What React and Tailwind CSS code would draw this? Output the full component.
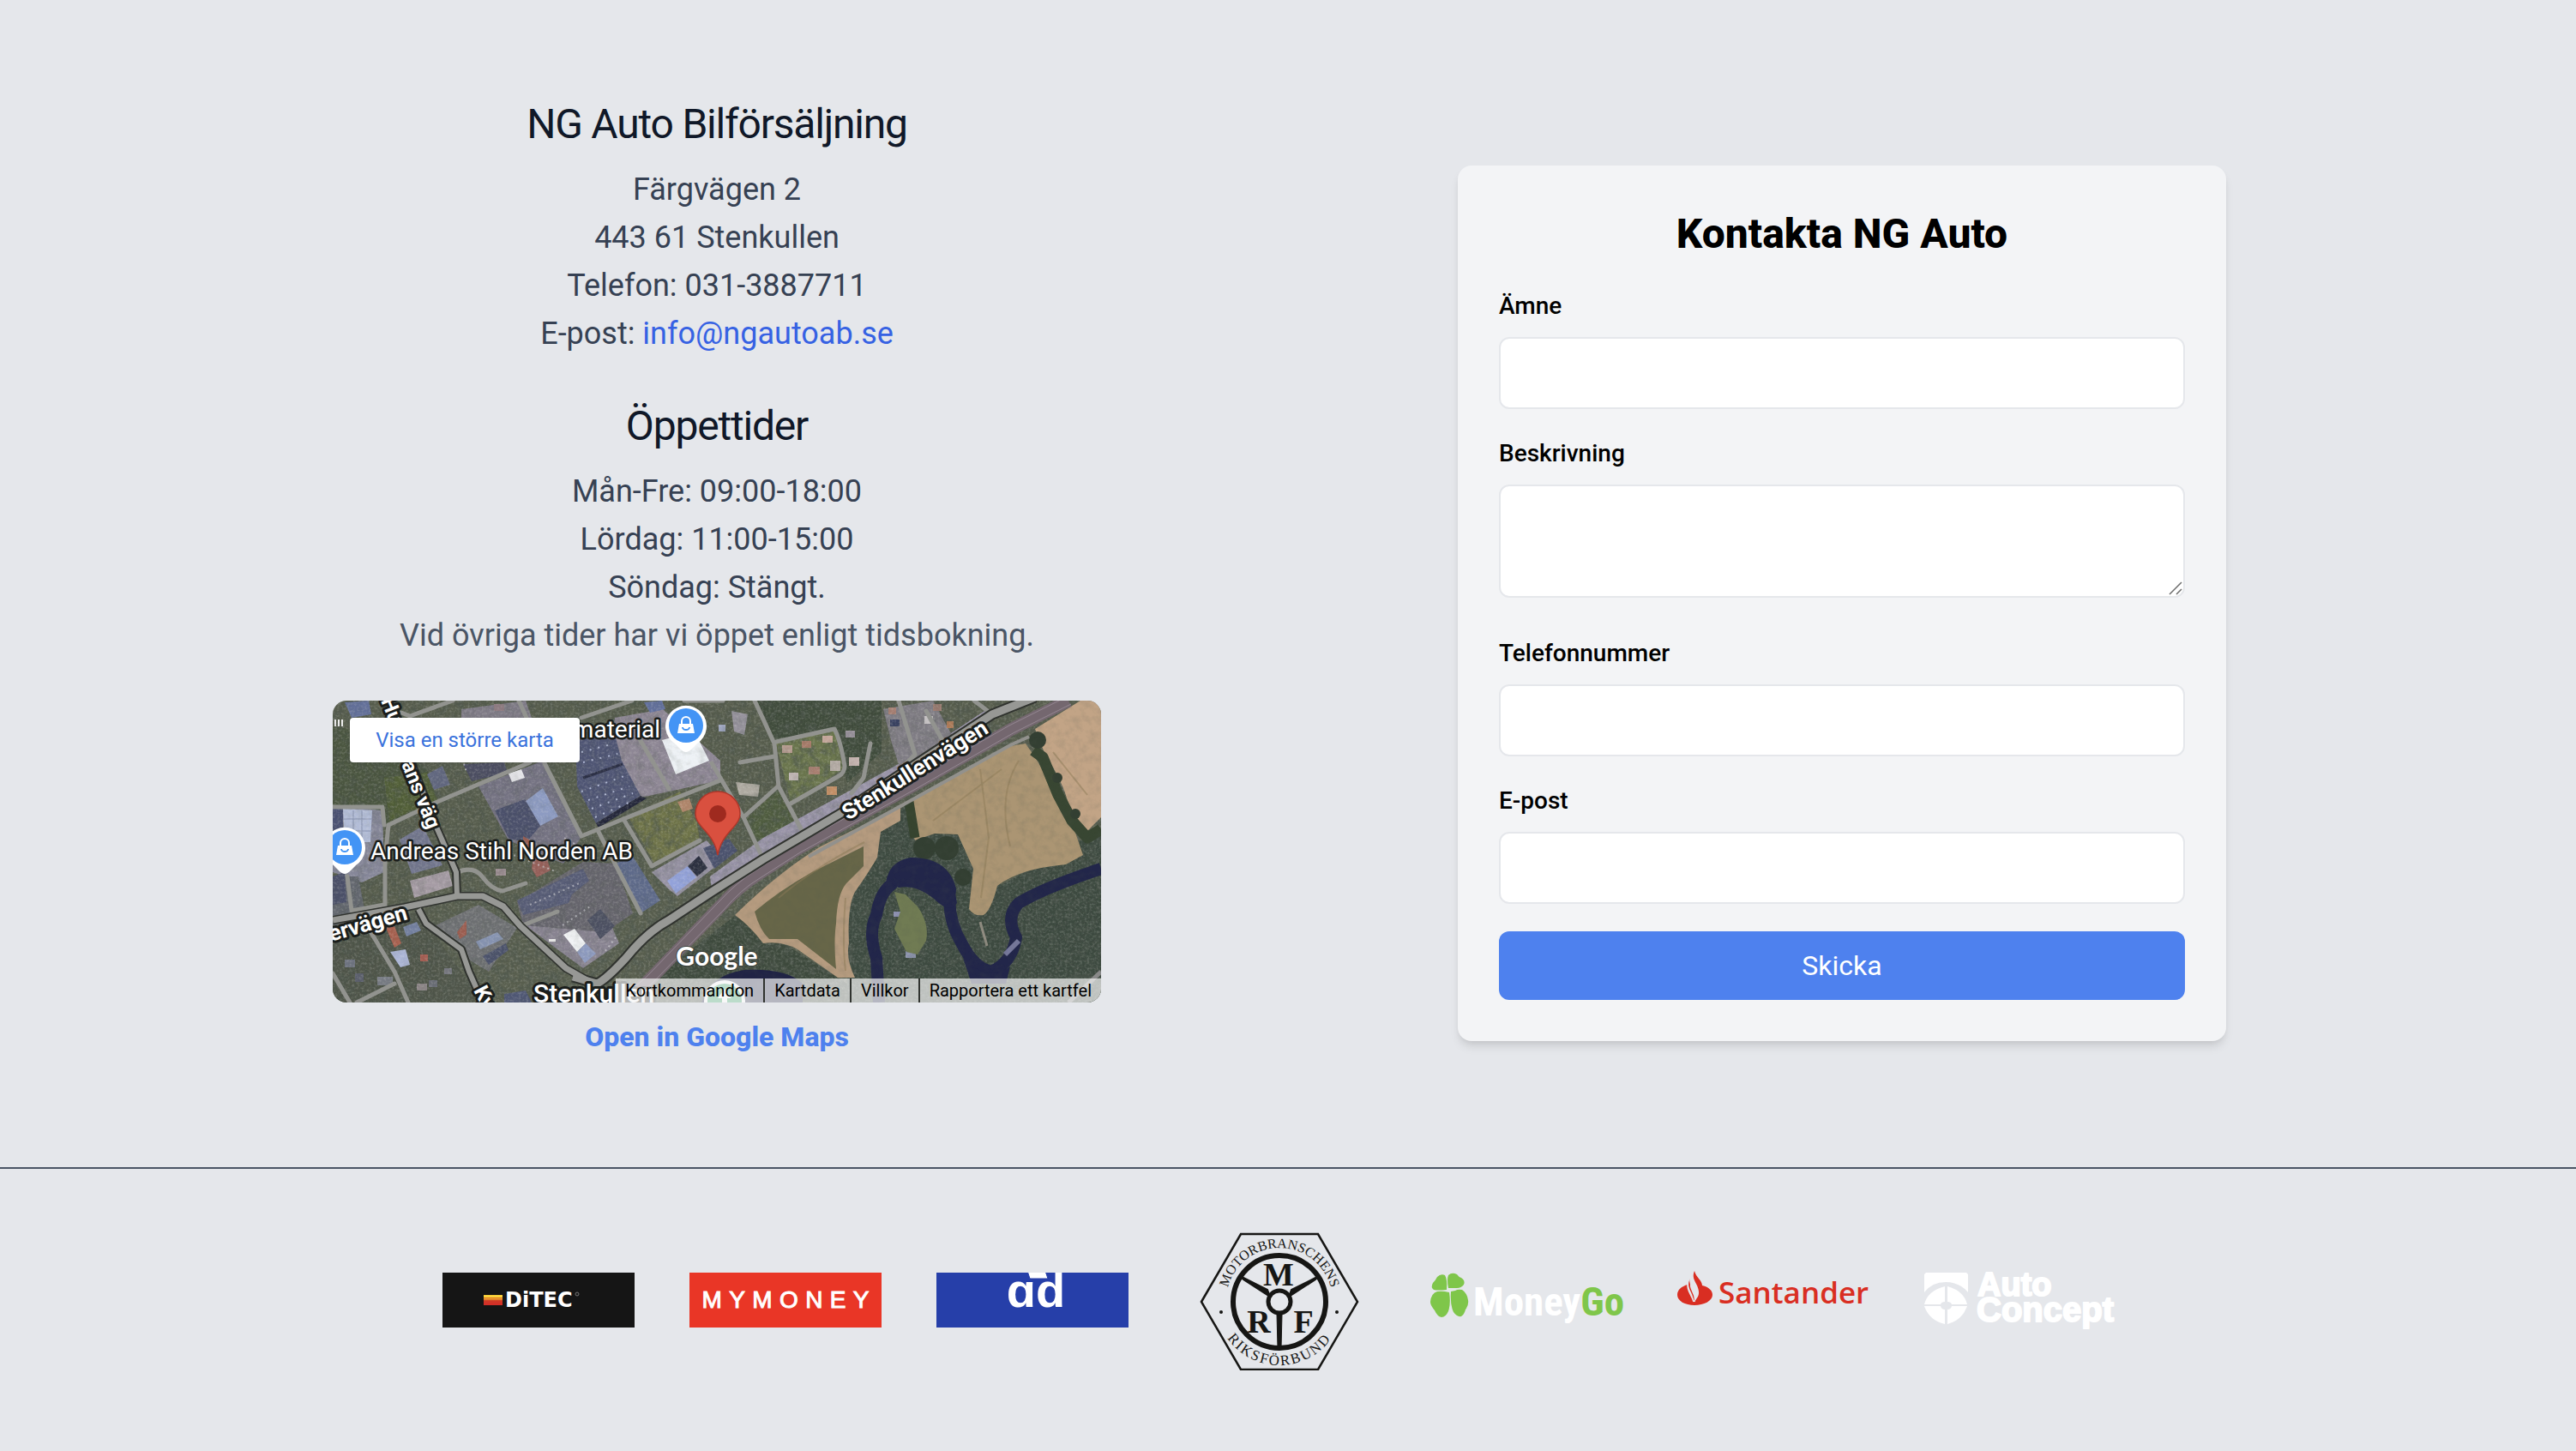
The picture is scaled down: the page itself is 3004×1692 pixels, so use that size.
import React from "react";

const halo = {
  fill: "#ffffff",
  stroke: "#1b1e1c",
  strokeLinejoin: "round",
  paintOrder: "stroke",
  fontFamily: "Roboto, sans-serif",
};

const paved = [
  ["329,20 385,10 452,70 452,93 392,106 359,113 335,70 325,46", "#8e8795"],
  ["170,100 245,70 292,156 269,190 205,163", "#757383"],
  ["0,122 58,128 60,200 34,212 0,200", "#868799"],
  ["90,210 135,198 140,216 95,230", "#a69ca5"],
  ["222,260 312,232 334,283 292,312 262,290", "#888391"],
  ["372,200 436,163 456,186 402,228 392,220", "#9692a3"],
  ["120,262 170,238 215,265 182,316 155,300", "#6f7174"],
  ["440,205 502,160 590,112 700,52 760,12 770,22 600,126 505,180 442,220", "#9994a8"],
  ["642,10 700,0 722,40 690,70 664,86 652,50", "#807d85"],
  ["150,10 225,0 232,20 150,40", "#7f7b87"],
  ["0,205 30,205 40,260 0,262", "#63676f"],
  ["292,188 330,190 350,248 318,270 222,262 215,235", "#66656d"],
  ["470,95 498,98 496,112 474,110", "#aeaaa1"],
  ["465,12 484,16 480,40 468,36", "#97939d"],
];

const roofs = [
  ["283,46 329,40 337,70 359,111 307,143 285,100", "#4f5574"],
  ["384,46 422,36 439,70 400,86", "#eef2f6"],
  ["224,118 245,102 263,135 242,146", "#8d9bc2"],
  ["189,128 224,115 242,146 225,166 205,160", "#4b506b"],
  ["205,85 220,80 224,90 209,95", "#e6e6ea"],
  ["12,126 46,128 44,165 14,165", "#b3bdd8"],
  ["0,126 12,126 12,165 0,165", "#4a5172"],
  ["0,205 14,200 16,235 0,238", "#4b5069"],
  ["78,162 105,146 128,192 92,202", "#73778f"],
  ["14,2 42,0 45,16 22,20", "#63709a"],
  ["110,86 128,76 137,98 118,104", "#61677f"],
  ["152,74 200,72 204,84 162,94", "#4c4e62"],
  ["234,180 250,184 254,198 238,206 232,196", "#96605a"],
  ["222,158 229,162 232,176 222,170", "#995f55"],
  ["215,233 292,196 299,210 279,226 275,236 222,250", "#575c76"],
  ["269,273 282,266 295,283 285,293", "#f2f4f6"],
  ["285,293 295,283 307,295 294,306", "#8e9bc0"],
  ["297,256 312,243 329,263 312,278", "#4c5062"],
  ["330,190 349,180 382,233 359,248", "#5e6a8a"],
  ["390,210 414,193 424,206 400,225", "#93a2da"],
  ["414,193 427,181 437,195 425,205", "#2c3040"],
  ["432,172 462,161 472,175 445,196", "#4b526e"],
  ["62,265 72,263 80,283 72,288", "#a8604f"],
  ["67,293 85,290 90,308 79,311", "#adb7d8"],
  ["82,264 98,258 103,268 86,275", "#7481a1"],
  ["167,281 192,270 199,278 172,290", "#8693b1"],
  ["175,298 202,283 205,291 182,308", "#4b526b"],
  ["145,270 156,256 156,273 148,278", "#9c5d50"],
  ["363,2 384,0 388,10 370,14", "#62709d"],
  ["200,342 225,338 232,352 200,352", "#4f5774"],
  ["402,118 416,114 420,126 408,130", "#b0866b"],
];

const houses = [
  [524, 52, 12, 9, "#b79c90"], [547, 47, 11, 8, "#a77b69"], [571, 41, 12, 8, "#c7a89c"],
  [598, 35, 11, 8, "#97909a"], [602, 66, 12, 10, "#c3b1ad"], [555, 77, 13, 9, "#a97f71"],
  [532, 84, 11, 9, "#c0b5b4"], [576, 100, 12, 10, "#c49067"], [580, 70, 12, 12, "#b5aca5"],
  [450, 28, 8, 8, "#9ba3bd"], [648, 8, 9, 8, "#a77f73"], [650, 22, 11, 8, "#3a4262"],
  [690, 18, 10, 9, "#c6c2c4"], [716, 24, 8, 8, "#ad7a57"], [700, 4, 10, 8, "#9a7a70"],
  [102, 296, 9, 8, "#a65e53"], [14, 302, 12, 9, "#6e7380"], [52, 322, 18, 10, "#777b84"],
  [26, 318, 10, 10, "#5b5f6c"], [98, 330, 12, 8, "#8c8587"], [112, 326, 10, 8, "#6b6e78"],
  [130, 312, 9, 7, "#777880"], [663, 230, 6, 6, "#a9abb5"], [654, 246, 8, 6, "#8b8fb0"],
  [668, 292, 12, 8, "#8990aa"], [530, 238, 8, 9, "#8a8989"], [190, 196, 12, 8, "#9a8b90"],
  [2, 22, 2, 8, "#f0f0f0"], [6, 22, 2, 8, "#f0f0f0"], [10, 22, 2, 8, "#f0f0f0"],
  [188, 4, 12, 8, "#8d7a80"], [252, 278, 8, 3, "#e8e8e8"],
];

const lanes = [
  "M65 145L122 118L230 72", "M65 145L61 185V243", "M247 73L290 158L339 138L452 93", "M310 153L359 248",
  "M339 138L372 193L428 163", "M145 200Q165 192 175 206T198 222L225 213", "M219 263L262 246",
  "M355 40L392 103", "M290 20L349 0", "M42 266L72 316L88 352", "M72 330L28 352", "M0 318L20 352",
  "M492 0L515 50L520 100L549 155", "M517 48L585 33Q592 46 597 76Q597 84 590 88L534 120", "M519 100L479 136L502 185",
  "M475 72L515 65", "M442 73L479 136", "M660 0L679 63L664 78", "M627 50L619 90L605 108", "M748 0L769 16", "M692 12L712 48",
  "M80 14L90 18L140 0", "M0 124L58 124L60 145", "M17 205L22 245L60 238", "M217 0L226 20", "M410 0L455 0",
];

function Satellite() {
  return (
    <svg viewBox="0 0 896 352" preserveAspectRatio="xMidYMid slice" className="absolute inset-0 h-full w-full" role="img" aria-label="Satellitkarta över Stenkullen">
      <defs>
        <filter id="foliage" x="0" y="0" width="100%" height="100%">
          <feTurbulence type="fractalNoise" baseFrequency="0.11" numOctaves="4" seed="7" />
          <feColorMatrix type="matrix" values="0 0 0 0 0.08  0 0 0 0 0.1  0 0 0 0 0.08  2.2 0 0 0 -0.9" />
        </filter>
        <filter id="grain" x="0" y="0" width="100%" height="100%">
          <feTurbulence type="fractalNoise" baseFrequency="0.35" numOctaves="3" seed="3" />
          <feColorMatrix type="matrix" values="0 0 0 0 0.8  0 0 0 0 0.8  0 0 0 0 0.75  0 1.4 0 0 -0.6" />
        </filter>
      </defs>
      <rect width="896" height="352" fill="#585e4e" />
      <path d="M0 30L60 40L110 80L122 118L62 145L56 128L0 122Z" fill="#4b5640" />
      <path d="M60 90L110 84L122 116L66 140Z" fill="#525f38" />
      <path d="M345 136L405 106L425 143L428 163L375 190Z" fill="#6f7449" />
      <path d="M517 50L585 34L596 80L534 118Z" fill="#6a754d" />
      <path d="M480 140L519 104L545 155L502 180Z" fill="#505d40" />
      <path d="M0 262L100 246L175 352H0Z" fill="#50564a" />
      <path d="M372 326L470 250L545 295L600 330V352H340Z" fill="#3d493c" />
      <path d="M640 150L680 110L740 160L780 215L896 150V352H600V240Z" fill="#3d4a40" />
      <path d="M495 0H640V60L600 96L585 34L517 48Z" fill="#404c3c" />
      <rect width="896" height="352" filter="url(#foliage)" opacity="0.6" />
      {paved.map(([p, c]) => <polygon key={p} points={p} fill={c} />)}
      <rect width="896" height="352" filter="url(#foliage)" opacity="0.14" />

      {roofs.map(([p, c]) => <polygon key={p} points={p} fill={c} />)}
      <path d="M292 90L338 74" stroke="#2b2f45" strokeWidth="3" />
      <path d="M307 143L359 111L366 114L310 148Z" fill="#23263a" />
      <path d="M24 128V165M34 128V165M12 138H46M12 152H46" stroke="#8791ad" strokeWidth="1" />
      <path d="M290 60L328 50M292 72L332 62M290 106L340 88M298 116L346 100M302 126L350 108M306 136L352 116" fill="none" stroke="#aeb6d2" strokeWidth="2" strokeDasharray="2 8" />
      <path d="M172 165L262 200M268 262L300 240M230 238L290 212M270 160L300 178M150 62L156 84M318 292L330 276" fill="none" stroke="#d5d5dc" strokeWidth="2" strokeDasharray="2 4" opacity="0.6" />
      {houses.map(([x, y, w, h, c]) => <rect key={`${x}-${y}`} x={x} y={y} width={w} height={h} fill={c} />)}
      <rect width="896" height="352" filter="url(#grain)" opacity="0.35" />

      <path d="M662 123L569 170Q520 200 469 250Q486 262 502 283Q524 280 542 290L589 323H609Q598 300 602 283Q600 240 609 223Q622 205 635 183L639 153L662 140Z" fill="#b59b7f" />
      <path d="M619 170L559 200Q520 222 492 246Q498 268 509 278H542L587 313Q584 280 587 260Q588 226 599 213L619 193Z" fill="#676648" />
      <path d="M682 110L790 53L808 50L819 66L859 133Q868 160 875 180L855 191Q800 196 775 216Q768 244 759 250Q748 252 742 243L747 196L729 156L702 155L679 163Q670 140 674 116Z" fill="#ab9573" />
      <path d="M819 33L872 0H896V136L879 153L859 123Q850 90 832 66Z" fill="#c2a486" />
      <path d="M755 80L765 160L756 230M800 70Q775 110 790 170M700 140L780 80M840 60L880 110M520 230Q560 196 620 165M598 230Q594 280 598 315" fill="none" stroke="#8d7c58" strokeWidth="2" opacity="0.5" />
      <path d="M672 118L679 160" stroke="#36442f" strokeWidth="11" />
      <path d="M817 58L828 66L846 110L862 140L880 160L896 150" fill="none" stroke="#384632" strokeWidth="13" strokeLinejoin="round" />
      <g fill="#333f32">
        <circle cx="822" cy="46" r="10" /><circle cx="845" cy="90" r="6" /><circle cx="866" cy="132" r="6" />
        <circle cx="690" cy="172" r="13" /><circle cx="716" cy="172" r="14" /><circle cx="735" cy="206" r="10" />
      </g>
      <path d="M637 352L634 300Q624 270 634 250Q638 224 652 214Q654 194 675 190Q712 190 720 220Q716 254 734 284Q748 312 768 316Q792 306 797 276Q784 252 800 236Q830 218 896 196" fill="none" stroke="#22264a" strokeWidth="14" strokeLinejoin="round" />
      <path d="M652 214Q654 190 690 190Q724 204 728 236Q720 250 700 230Q680 214 660 218Z" fill="#22264a" />
      <path d="M735 300Q765 330 790 310L785 330H745Z" fill="#22264a" />
      <path d="M430 352Q440 320 480 314Q530 312 548 330V352Z" fill="#202345" />
      <path d="M655 223L668 226L682 240Q696 260 692 280L682 296L669 293L655 266L662 246Z" fill="#707b53" />
      <path d="M755 258L763 286" stroke="#8f8b80" strokeWidth="3" />
      <path d="M784 296L800 280" stroke="#77799c" strokeWidth="6" />
      <path d="M896 316L858 352" stroke="#8b8b8b" strokeWidth="5" />
      <rect width="896" height="352" filter="url(#foliage)" opacity="0.14" />

      <path d="M340 352L369 326L452 240Q474 216 495 203L542 173L675 100L792 33L858 0" fill="none" stroke="#74676f" strokeWidth="15" />
      <path d="M340 356L372 330L456 244Q476 220 498 207L545 177L678 104L795 37L861 4M336 348L366 322L449 236Q472 211 492 199L539 169L672 96L789 29L855 -4" fill="none" stroke="#938791" strokeWidth="1" />
      <path d="M555 182L675 116L790 52L812 42" fill="none" stroke="#92918d" strokeWidth="4" />

      <g fill="none" stroke="#92938f" strokeWidth="5" strokeLinejoin="round" strokeLinecap="round">
        {lanes.map((d) => <path key={d} d={d} />)}
      </g>
      <g fill="none" strokeLinejoin="round">
        <g stroke="#30332f" strokeWidth="10">
          <path d="M0 256L84 241L145 228H175L199 240L219 263L272 312L300 328" />
          <path d="M145 228L144 200L119 143L95 80L72 10" />
          <path d="M100 243L109 260L150 290L159 316L175 352" />
        </g>
        <path d="M280 322L308 330Q318 326 342 300Q366 270 392 256L442 223L502 185L595 130L769 16L819 -4" stroke="#30332f" strokeWidth="13" />
        <g stroke="#979895" strokeWidth="7">
          <path d="M0 256L84 241L145 228H175L199 240L219 263L272 312L300 328" />
          <path d="M145 228L144 200L119 143L95 80L72 10" strokeWidth="6" />
          <path d="M100 243L109 260L150 290L159 316L175 352" strokeWidth="6" />
          <path d="M280 322L308 330Q318 326 342 300Q366 270 392 256L442 223L502 185L595 130L769 16L819 -4" strokeWidth="9" />
        </g>
      </g>

      <g {...halo} fontWeight="700" strokeWidth="6" fontSize="24">
        <text transform="translate(56 0) rotate(68)">Hu</text>
        <text transform="translate(80 74) rotate(68)">ans väg</text>
        <text transform="translate(164 338) rotate(62)">Ky</text>
        <text transform="translate(-2 281) rotate(-16)" fontSize="26">ervägen</text>
        <text transform="translate(601 140) rotate(-32)" fontSize="26">Stenkullenvägen</text>
        <text x="234" y="352" fontSize="30" fontWeight="500">Stenkullen</text>
      </g>
      <g {...halo} strokeWidth="5" fontSize="28">
        <text x="44" y="185">Andreas Stihl Norden AB</text>
        <text x="382" y="43" textAnchor="end">material</text>
      </g>
      <ShopPin x={412} y={29} />
      <ShopPin x={14} y={171} />
      <circle cx="457" cy="350" r="24" fill="#ffffff" />
      <circle cx="457" cy="350" r="20" fill="#34a265" />
      <path d="M449 347L457 336L465 347H460V352H454V347Z" fill="#ffffff" />
      <path d="M449 180C446 164 438 156 431 148C426 142 423 138 423 132A26 26 0 0 1 475 132C475 138 472 142 467 148C460 156 452 164 449 180Z" fill="#d9503f" stroke="#b1372a" strokeWidth="1.5" />
      <circle cx="449" cy="132" r="10" fill="#9f2a1f" />
      <text x="448" y="309" textAnchor="middle" fill="#ffffff" stroke="#3c413c" strokeWidth="2" paintOrder="stroke" fontFamily="Lato, sans-serif" fontWeight="700" fontSize="30">Google</text>
    </svg>
  );
}

function ShopPin({ x, y }) {
  return (
    <g transform={`translate(${x} ${y})`}>
      <path d="M0 31C-4 31 -8 26 -13 21A24 24 0 1 1 13 21C8 26 4 31 0 31Z" fill="#ffffff" />
      <circle r="20" fill="#4394f5" />
      <path d="M-8 -2H8L10 9H-10Z" fill="#ffffff" />
      <path d="M-5 -2V-5A5 5 0 0 1 5 -5V-2" fill="none" stroke="#ffffff" strokeWidth="2" />
      <path d="M-4 2A4 3 0 0 0 4 2" fill="none" stroke="#4394f5" strokeWidth="2" />
    </g>
  );
}

function MapCard() {
  return (
    <div className="relative h-[352px] w-full overflow-hidden rounded-2xl">
      <Satellite />
      <a href="#karta" className="absolute top-5 left-5 flex h-[52px] w-[268px] items-center justify-center rounded bg-white text-2xl text-[#3b73dc] shadow">
        Visa en större karta
      </a>
      <div className="absolute right-0 bottom-0 flex h-7 items-end divide-x-2 divide-[#30332f] bg-[#f5f5f5]/70 text-xl leading-7 text-black">
        <button type="button" className="px-[11px]">Kortkommandon</button>
        <button type="button" className="px-[11px]">Kartdata</button>
        <a href="#villkor" className="px-[11px]">Villkor</a>
        <a href="#kartfel" className="px-[11px]">Rapportera ett kartfel</a>
      </div>
    </div>
  );
}

const labelClass = "block text-[28px] leading-10 font-medium text-black";
const inputClass = "mt-4 block h-[84px] w-full rounded-xl border-2 border-gray-200 bg-white px-4 text-[32px]";

function Field({ id, label, type }) {
  return (
    <div className="mb-8">
      <label htmlFor={id} className={labelClass}>{label}</label>
      <input id={id} type={type} className={inputClass} />
    </div>
  );
}

function ContactForm() {
  return (
    <form className="w-full max-w-[896px] rounded-2xl bg-gray-100 p-12 shadow-[0_8px_12px_-2px_rgba(0,0,0,0.1),0_4px_8px_-4px_rgba(0,0,0,0.1)]">
      <h2 className="mb-8 text-center text-5xl leading-[64px] font-extrabold text-black">Kontakta NG Auto</h2>
      <Field id="subject" label="Ämne" type="text" />
      <div className="mb-[45px]">
        <label htmlFor="description" className={labelClass}>Beskrivning</label>
        <div className="relative mt-4">
          <textarea id="description" className="block h-[132px] w-full resize-none rounded-xl border-2 border-gray-200 bg-white px-4 py-3 text-[32px]" />
          <svg viewBox="0 0 16 16" className="pointer-events-none absolute right-[3px] bottom-[3px] size-4" fill="none" stroke="#6b6b6b" strokeWidth="1.5" aria-hidden="true">
            <path d="M1 15L15 1M9 15L15 9" />
          </svg>
        </div>
      </div>
      <Field id="phone" label="Telefonnummer" type="tel" />
      <Field id="email" label="E-post" type="email" />
      <button type="submit" className="block h-20 w-full rounded-xl bg-[#4e81ee] text-[32px] leading-[48px] text-white">Skicka</button>
    </form>
  );
}

function Ditec() {
  return (
    <svg viewBox="0 0 224 64" className="h-16 w-56" role="img" aria-label="Ditec">
      <defs>
        <linearGradient id="ditec" x1="0" y1="0" x2="0" y2="1">
          <stop offset="0" stopColor="#f5c832" /><stop offset="0.2" stopColor="#f0a92e" /><stop offset="0.5" stopColor="#e07a2a" />
          <stop offset="0.55" stopColor="#cf3a27" /><stop offset="1" stopColor="#d42c27" />
        </linearGradient>
      </defs>
      <rect width="224" height="64" fill="#151515" />
      <rect x="48" y="26" width="22" height="12" fill="url(#ditec)" />
      <rect x="48" y="27" width="22" height="1" fill="#fff04a" />
      <text x="73" y="40" fill="#ffffff" fontFamily="'DejaVu Sans', sans-serif" fontWeight="700" fontSize="24">DiTEC</text>
      <circle cx="157" cy="25" r="2" fill="none" stroke="#777777" />
    </svg>
  );
}

function MyMoney() {
  return (
    <div className="flex h-16 w-56 items-center justify-center bg-[#e93626] font-['Liberation_Sans',sans-serif] text-[28px] tracking-[0.3em] text-white">
      <span className="-mr-[0.3em] font-medium [-webkit-text-stroke:1px_white]">MYMONEY</span>
    </div>
  );
}

function AdLogo() {
  return (
    <svg viewBox="0 0 224 64" className="h-16 w-56" role="img" aria-label="ad">
      <rect width="224" height="64" fill="#263fa9" />
      <text x="116" y="40" textAnchor="middle" fill="#ffffff" fontFamily="'Liberation Sans', sans-serif" fontWeight="700" fontSize="56">ɑd</text>
      <path d="M106 -2H127L130 7H109Z" fill="#ffffff" stroke="#263fa9" strokeWidth="1" />
    </svg>
  );
}

function MrfLogo() {
  return (
    <svg viewBox="0 14 224 164" className="h-[164px] w-56" role="img" aria-label="Motorbranschens Riksförbund">
      <defs>
        <path id="arcTop" d="M54 119A62 62 0 1 1 170 119" />
        <path id="arcBottom" d="M38 98A74 74 0 0 0 186 98" />
      </defs>
      <path d="M21 98L67 19H157L203 98L157 177H67Z" fill="none" stroke="#161614" strokeWidth="2.5" />
      <circle cx="112" cy="98" r="54" fill="none" stroke="#161614" strokeWidth="6" />
      <path d="M66 68L70 72L101 92L98 84ZM158 68L154 72L123 92L126 84Z" fill="#161614" stroke="#161614" strokeWidth="2" />
      <path d="M109 112H115L114 152H110Z" fill="#161614" stroke="#161614" />
      <circle cx="112" cy="98" r="13" fill="#e5e7eb" stroke="#161614" strokeWidth="5" />
      <g fill="#161614" fontFamily="'Liberation Serif', serif" textAnchor="middle">
        <g fontWeight="700" fontSize="38">
          <text x="111" y="79">M</text>
          <text x="88" y="134">R</text>
          <text x="140" y="134">F</text>
        </g>
        <text fontSize="16"><textPath href="#arcTop" startOffset="50%">MOTORBRANSCHENS</textPath></text>
        <text fontSize="17" letterSpacing="2"><textPath href="#arcBottom" startOffset="50%">RIKSFÖRBUND</textPath></text>
      </g>
      <circle cx="44" cy="110" r="2" fill="#161614" />
      <circle cx="179" cy="110" r="2" fill="#161614" />
    </svg>
  );
}

function MoneyGo() {
  return (
    <svg viewBox="0 0 224 64" className="h-16 w-56 overflow-visible" role="img" aria-label="MoneyGo">
      <g fill="#7fc64a">
        <path d="M19 20Q20 8 17 3Q12 1 8 5Q6 9 3 12Q0 17 4 20Q9 21 19 20Z" />
        <path d="M21 18Q19 8 21 3Q25 -1 31 2Q33 5 36 6Q41 9 39 14Q36 18 31 18Z" />
        <path d="M22 23Q24 36 21 45Q18 52 13 52Q8 51 5 44Q0 38 0 34Q1 24 8 22Q14 21 22 23Z" />
        <path d="M24 22Q23 38 27 46Q31 52 36 51Q40 48 41 43Q45 38 44 32Q43 24 37 20Q32 19 29 21Z" />
      </g>
      <text x="50" y="50" fontFamily="'Liberation Sans Narrow', 'Roboto Condensed', 'Liberation Sans', sans-serif" fontWeight="700" fontSize="47" fill="#ffffff">
        Money<tspan fill="#7fc64a">Go</tspan>
      </text>
    </svg>
  );
}

function Santander() {
  return (
    <svg viewBox="0 0 224 64" className="h-16 w-56 overflow-visible" role="img" aria-label="Santander">
      <path d="M12 14C5 16 0 20 0 26C0 33 9 38 20 38S41 33 41 26C41 21 37 17 29 15C29 9 22 6 20 -2C17 5 20 9 23 15C25 20 26 24 24 28L20 34C21 27 16 22 15 16V7C12 12 13 17 16 23C18 27 19 31 19 34C18 29 12 23 12 14Z" fill="#d92e22" />
      <path d="M12 14C11 21 17 26 19 34M15 7C14 17 23 24 20 34" fill="none" stroke="#e5e7eb" strokeWidth="1.5" />
      <text x="48" y="36" fontFamily="'Open Sans', 'Noto Sans', sans-serif" fontWeight="600" fontSize="35" fill="#d92e22">Santander</text>
    </svg>
  );
}

function AutoConcept() {
  return (
    <svg viewBox="0 0 224 64" className="h-16 w-56 overflow-visible" role="img" aria-label="Auto Concept">
      <g fill="#ffffff">
        <path d="M2 0H49L51 2V23Q41 11 25 11T0 23V2Z" />
        <path d="M24 16V34Q20 34 19 37H0Q4 21 24 16ZM27 16V34Q31 34 32 37H50Q46 21 27 16ZM24 60V43Q20 43 19 39H0Q6 56 24 60ZM27 60V43Q31 43 32 39H50Q44 56 27 60Z" />
        <g fontFamily="'Liberation Sans', sans-serif" fontWeight="700" fontSize="38" stroke="#ffffff" strokeWidth="2" strokeLinejoin="round">
          <text x="62" y="27">Auto</text>
          <text x="61" y="57" fontSize="40">Concept</text>
        </g>
      </g>
    </svg>
  );
}

export default function App() {
  return (
    <div className="min-h-screen bg-gray-200 font-[Roboto,sans-serif]">
      <main className="grid grid-cols-2 items-center pt-[113px] pr-[200px] pb-[68px] pl-[180px]">
        <section className="mx-auto w-full max-w-[896px] pb-[60px] text-center text-4xl leading-[56px] text-gray-700">
          <h2 className="mb-4 text-5xl leading-[64px] tracking-tight text-gray-900">NG Auto Bilförsäljning</h2>
          <p>Färgvägen 2</p>
          <p>443 61 Stenkullen</p>
          <p>Telefon: 031-3887711</p>
          <p>E-post: <a href="mailto:info@ngautoab.se" className="text-[#3662e3]">info@ngautoab.se</a></p>
          <h2 className="mt-12 mb-4 text-5xl leading-[64px] tracking-tight text-gray-900">Öppettider</h2>
          <p>Mån-Fre: 09:00-18:00</p>
          <p>Lördag: 11:00-15:00</p>
          <p>Söndag: Stängt.</p>
          <p className="mb-12 text-gray-600">Vid övriga tider har vi öppet enligt tidsbokning.</p>
          <MapCard />
          <a href="#google-maps" className="mt-4 block text-[32px] leading-[48px] font-extrabold text-[#4e81ee]">Open in Google Maps</a>
        </section>
        <div className="flex justify-center">
          <ContactForm />
        </div>
      </main>
      <footer className="border-t-2 border-gray-600 pt-[71px] pr-5">
        <div className="flex items-center justify-center gap-16">
          <Ditec />
          <MyMoney />
          <AdLogo />
          <MrfLogo />
          <MoneyGo />
          <Santander />
          <AutoConcept />
        </div>
      </footer>
    </div>
  );
}
